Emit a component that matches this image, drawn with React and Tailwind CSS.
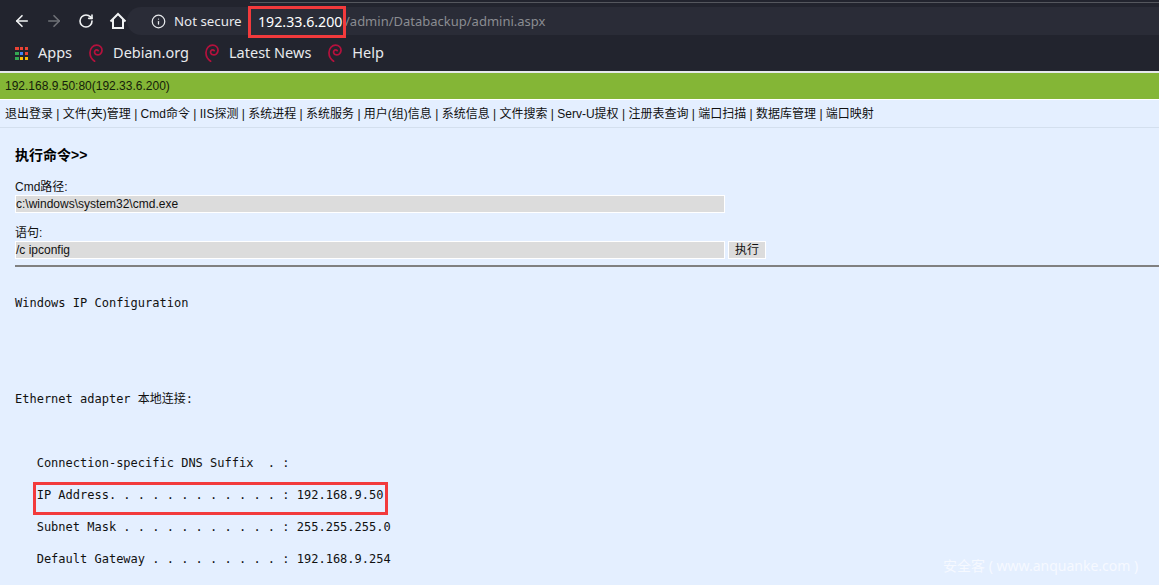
import React from "react";
import { ArrowLeft, ArrowRight, RotateCw, Info } from "lucide-react";

const cjk = "font-['Liberation_Sans','Noto_Sans_CJK_SC',sans-serif]";

const navItems = ["退出登录", "文件(夹)管理", "Cmd命令", "IIS探测", "系统进程", "系统服务", "用户(组)信息", "系统信息", "文件搜索", "Serv-U提权", "注册表查询", "端口扫描", "数据库管理", "端口映射"];

const output = `Windows IP Configuration





Ethernet adapter 本地连接:



   Connection-specific DNS Suffix  . :

   IP Address. . . . . . . . . . . . : 192.168.9.50

   Subnet Mask . . . . . . . . . . . : 255.255.255.0

   Default Gateway . . . . . . . . . : 192.168.9.254`;

function Swirl() {
  return (
    <svg width="14" height="18" viewBox="0 0 14 18" fill="none" stroke="#b5113d" strokeWidth="1.7" strokeLinecap="round">
      <path d="M5.6 17.2C2.6 15 .9 12 1 8.6C1.1 4.2 4 1.2 7.6 1.2C11 1.2 13.2 3.6 13 6.6C12.8 9.6 10.2 11.4 7.8 10.8C5.8 10.3 5 8.2 6 6.8C6.8 5.7 8.4 5.7 9.2 6.6" />
    </svg>
  );
}

function HomeIcon() {
  return (
    <svg width="18" height="18" viewBox="0 0 18 18" fill="none" stroke="#f1f3f4" strokeWidth="2" strokeLinejoin="miter">
      <path d="M1.5 9.5L9 2L16.5 9.5M4 7.5V16H14V7.5" />
    </svg>
  );
}

function AppsGrid() {
  const colors = ["#ea4335", "#ea4335", "#ea4335", "#34a853", "#4285f4", "#ea4335", "#34a853", "#fbbc04", "#fbbc04"];
  return (
    <div className="grid grid-cols-3 gap-[1.5px] w-[13px] h-[13px]">
      {colors.map((c, i) => (
        <span key={i} className="w-[3.5px] h-[3.5px]" style={{ background: c }} />
      ))}
    </div>
  );
}

function Bookmark({ label, className }) {
  return (
    <div className={`flex items-center ${className}`}>
      <Swirl />
      <span className="ml-[10px]">{label}</span>
    </div>
  );
}

export default function App() {
  return (
    <div className="relative w-[1159px] h-[585px] overflow-hidden bg-[#e4efff]">
      <div className="h-[73px] bg-[#22242e] border-b-2 border-[#e6e8ea] font-['Noto_Sans',sans-serif] text-[14.5px] text-[#e8eaed]">
        <div className="h-[36px] pt-[7px] flex">
          <div className="flex items-center w-[127px] pl-[13px] -mt-[2px]">
            <ArrowLeft size={18} strokeWidth={2.2} className="text-[#f1f3f4]" />
            <ArrowRight size={18} strokeWidth={2.2} className="text-[#6f7177] ml-[14px]" />
            <RotateCw size={16} strokeWidth={2.4} className="text-[#f1f3f4] ml-[15px]" />
            <div className="ml-[15px]"><HomeIcon /></div>
          </div>
          <div className="flex-1 h-[28px] bg-[#2a2c37] rounded-l-[14px] flex items-center pl-[24px]">
            <Info size={15} strokeWidth={2} className="text-[#e8eaed] mr-[8px]" />
            <span className="w-[84px] pt-[1px] text-[13.3px]">Not secure</span>
            <span className="w-[87px] pt-[1px] text-[14.2px] text-white">192.33.6.200</span>
            <span className="pt-[1px] text-[13px] text-[#8a8c92]">/admin/Databackup/admini.aspx</span>
          </div>
        </div>
        <div className="h-[34px] flex items-center pl-[15px]">
          <AppsGrid />
          <span className="ml-[10px]">Apps</span>
          <Bookmark label="Debian.org" className="ml-[17px]" />
          <Bookmark label="Latest News" className="ml-[16px]" />
          <Bookmark label="Help" className="ml-[17px]" />
        </div>
      </div>

      <div className={`h-[26px] bg-[#84b636] flex items-center pl-[5px] text-[12px] text-[#14200a] ${cjk}`}>
        192.168.9.50:80(192.33.6.200)
      </div>

      <div className={`h-[29px] border-y border-[#d3dfee] border-t-white flex items-center pl-[5px] text-[12px] text-[#111] ${cjk}`}>
        {navItems.map((n, i) => (
          <span key={n} className="whitespace-pre">{i > 0 ? " | " : ""}{n}</span>
        ))}
      </div>

      <div className={`pl-[15px] pt-[18px] text-[12px] text-[#111] ${cjk}`}>
        <div className="text-[14px] leading-[18px] font-bold text-black">执行命令&gt;&gt;</div>
        <div className="mt-[15px] leading-[16px]">Cmd路径:</div>
        <div className="w-[710px] h-[18px] pt-[1px] bg-[#dcdcdc] border border-white leading-[15px]">c:\windows\system32\cmd.exe</div>
        <div className="mt-[12px] leading-[16px]">语句:</div>
        <div className="flex">
          <div className="w-[710px] h-[18px] pt-[1px] bg-[#dcdcdc] border border-white leading-[15px]">/c ipconfig</div>
          <div className="w-[38px] h-[18px] pt-[1px] ml-[3px] bg-[#dcdcdc] border border-white leading-[15px] text-center">执行</div>
        </div>
        <div className="h-[2px] mt-[6px] bg-[#808080]" />
        <pre className="mt-[28px] text-[12px] leading-[16px] text-[#111] font-['DejaVu_Sans_Mono','Noto_Sans_CJK_SC',monospace]">{output}</pre>
      </div>

      <div className="absolute left-[250px] right-0 top-[2px] h-[1px] bg-[#55575e]" />
      <div className="absolute left-[248px] top-[6px] w-[98px] h-[32px] border-[3px] border-[#f23a3c]" />
      <div className="absolute left-[33px] top-[482px] w-[355px] h-[33px] border-[3px] border-[#f23a3c]" />
      <div className="absolute left-[943px] top-[557px] text-[14px] leading-[18px] text-[#f6f9ff] font-['Noto_Sans','Noto_Sans_CJK_SC',sans-serif] whitespace-pre">安全客 ( www.anquanke.com )</div>
    </div>
  );
}
